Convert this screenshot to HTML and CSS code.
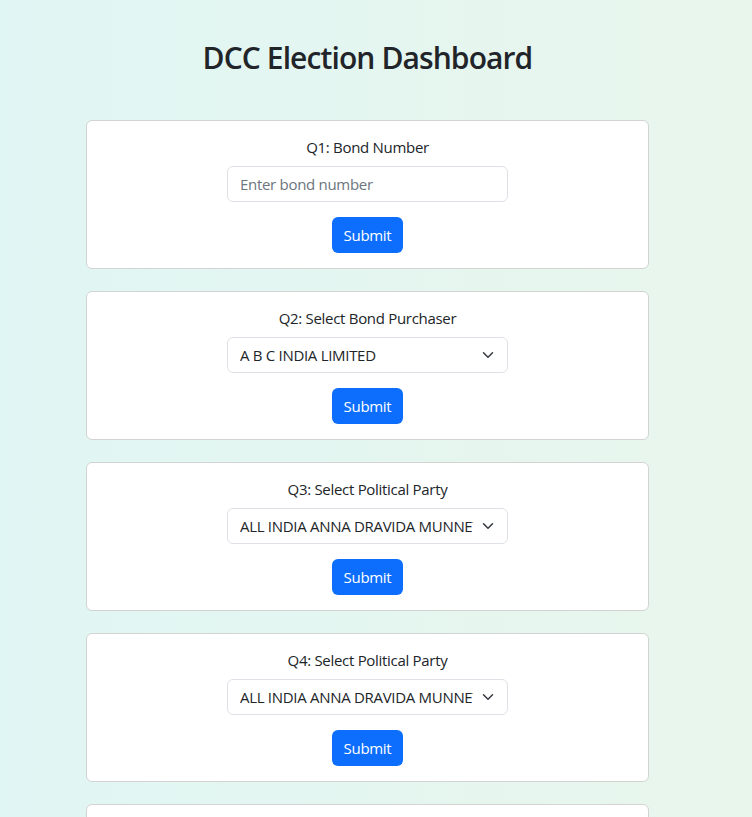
FILE: index.html
```html
<!DOCTYPE html>
<html lang="en">
<head>
<meta charset="utf-8">
<title>DCC Election Dashboard</title>
<link rel="stylesheet" href="styles.css">
</head>
<body>
<main class="page">
  <h1 class="title">DCC Election Dashboard</h1>
  <div class="cards">
    <section class="card">
      <label class="card-label" for="q1">Q1: Bond Number</label>
      <input class="field" id="q1" type="text" placeholder="Enter bond number">
      <button class="btn" type="button">Submit</button>
    </section>
    <section class="card">
      <label class="card-label" for="q2">Q2: Select Bond Purchaser</label>
      <div class="select-wrap">
        <select class="field select" id="q2"><option>A B C INDIA LIMITED</option></select>
        <svg class="chevron" viewBox="0 0 16 16" width="16" height="12" aria-hidden="true"><path d="m2 5 6 6 6-6" fill="none" stroke="#343a40" stroke-width="2" stroke-linecap="round" stroke-linejoin="round"/></svg>
      </div>
      <button class="btn" type="button">Submit</button>
    </section>
    <section class="card">
      <label class="card-label" for="q3">Q3: Select Political Party</label>
      <div class="select-wrap">
        <select class="field select" id="q3"><option>ALL INDIA ANNA DRAVIDA MUNNETRA KAZHAGAM</option></select>
        <svg class="chevron" viewBox="0 0 16 16" width="16" height="12" aria-hidden="true"><path d="m2 5 6 6 6-6" fill="none" stroke="#343a40" stroke-width="2" stroke-linecap="round" stroke-linejoin="round"/></svg>
      </div>
      <button class="btn" type="button">Submit</button>
    </section>
    <section class="card">
      <label class="card-label" for="q4">Q4: Select Political Party</label>
      <div class="select-wrap">
        <select class="field select" id="q4"><option>ALL INDIA ANNA DRAVIDA MUNNETRA KAZHAGAM</option></select>
        <svg class="chevron" viewBox="0 0 16 16" width="16" height="12" aria-hidden="true"><path d="m2 5 6 6 6-6" fill="none" stroke="#343a40" stroke-width="2" stroke-linecap="round" stroke-linejoin="round"/></svg>
      </div>
      <button class="btn" type="button">Submit</button>
    </section>
    <section class="card">
      <label class="card-label" for="q5">Q5: Select Political Party</label>
      <div class="select-wrap">
        <select class="field select" id="q5"><option>ALL INDIA ANNA DRAVIDA MUNNETRA KAZHAGAM</option></select>
        <svg class="chevron" viewBox="0 0 16 16" width="16" height="12" aria-hidden="true"><path d="m2 5 6 6 6-6" fill="none" stroke="#343a40" stroke-width="2" stroke-linecap="round" stroke-linejoin="round"/></svg>
      </div>
      <button class="btn" type="button">Submit</button>
    </section>
  </div>
</main>
</body>
</html>
```
FILE: styles.css
```css
html, body {
  margin: 0;
  padding: 0;
}
body {
  min-height: 100vh;
  background: linear-gradient(to right, #e0f6f4, #e9f6ec);
  font-family: "Open Sans", "Noto Sans", sans-serif;
  font-size: 15px;
  line-height: 24px;
  letter-spacing: -0.3px;
  color: #212529;
}
.page {
  width: 735px;
  padding: 40px 0 40px;
  box-sizing: border-box;
}
.title {
  margin: 0 0 44px;
  text-align: center;
  font-size: 30px;
  line-height: 36px;
  font-weight: 600;
  letter-spacing: -0.9px;
  color: #212529;
}
.cards {
  display: flex;
  flex-direction: column;
  align-items: center;
  gap: 22px;
}
.card {
  width: 563px;
  box-sizing: border-box;
  background: #fff;
  border: 1px solid #d3d3d3;
  border-radius: 6px;
  padding: 15px;
  display: flex;
  flex-direction: column;
  align-items: center;
}
.card-label {
  display: block;
  height: 24px;
  margin-bottom: 6px;
  margin-top: -1px;
  padding-bottom: 1px;
}
.field {
  width: 281px;
  height: 36px;
  box-sizing: border-box;
  border: 1px solid #dee2e6;
  border-radius: 6px;
  padding: 0 12px;
  font-family: inherit;
  font-size: 15px;
  letter-spacing: -0.3px;
  color: #212529;
  background: #fff;
  outline: none;
}
.field::placeholder {
  color: #6c757d;
}
.select-wrap {
  position: relative;
  width: 281px;
  height: 36px;
}
.select {
  appearance: none;
  -webkit-appearance: none;
  padding-right: 34px;
}
.chevron {
  position: absolute;
  right: 12px;
  top: 12px;
  pointer-events: none;
}
.btn {
  margin-top: 15px;
  height: 36px;
  padding: 0 12px;
  border: none;
  border-radius: 6px;
  background: #0d6efd;
  color: #fff;
  font-family: inherit;
  font-size: 15px;
  letter-spacing: -0.3px;
  cursor: pointer;
}
```
